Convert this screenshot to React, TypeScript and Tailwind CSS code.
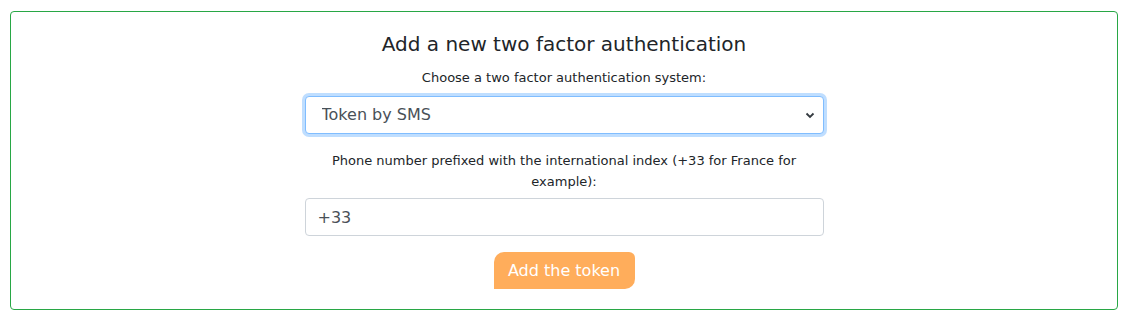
export default function App() {
  return (
    <div className="min-h-screen bg-white pl-[10px] pr-[21px] pt-[11px]" style={{ fontFamily: '"DejaVu Sans", sans-serif' }}>
      <div className="rounded-[4px] border border-[#28a745] pt-[20px] pb-[20px]">
        <div className="mx-auto flex w-[519px] flex-col items-center text-[#212529]">
          <h5 className="text-[20px] leading-[24px]">Add a new two factor authentication</h5>
          <label className="mt-[11px] text-[13px] leading-[21px]">Choose a two factor authentication system:</label>
          <div className="relative mt-[8px] w-full">
            <select
              defaultValue="sms"
              className="h-[38px] w-full appearance-none rounded-[4px] border border-[#80bdff] bg-white pl-[16px] text-[16px] text-[#495057] shadow-[0_0_0_3px_rgba(0,123,255,0.25)] outline-none"
            >
              <option value="sms">Token by SMS</option>
              <option value="app">Token by application</option>
            </select>
            <svg
              className="pointer-events-none absolute right-[9px] top-[15px]"
              width="10"
              height="8"
              viewBox="0 0 10 8"
            >
              <path d="M1.5 2.5 L5 6 L8.5 2.5" fill="none" stroke="#343a40" strokeWidth="1.8" />
            </svg>
          </div>
          <label className="mt-[16px] text-center text-[13px] leading-[21px]">
            Phone number prefixed with the international index (+33 for France for example):
          </label>
          <input
            defaultValue="+33"
            className="mt-[6px] h-[38px] w-full rounded-[4px] border border-[#ced4da] bg-white px-[12px] text-[16px] text-[#495057] outline-none"
          />
          <button className="mt-[16px] h-[37px] w-[141px] rounded-tl-[10px] rounded-tr-[6px] rounded-br-[10px] bg-[#ffad5b] text-[16px] text-white">
            Add the token
          </button>
        </div>
      </div>
    </div>
  );
}
